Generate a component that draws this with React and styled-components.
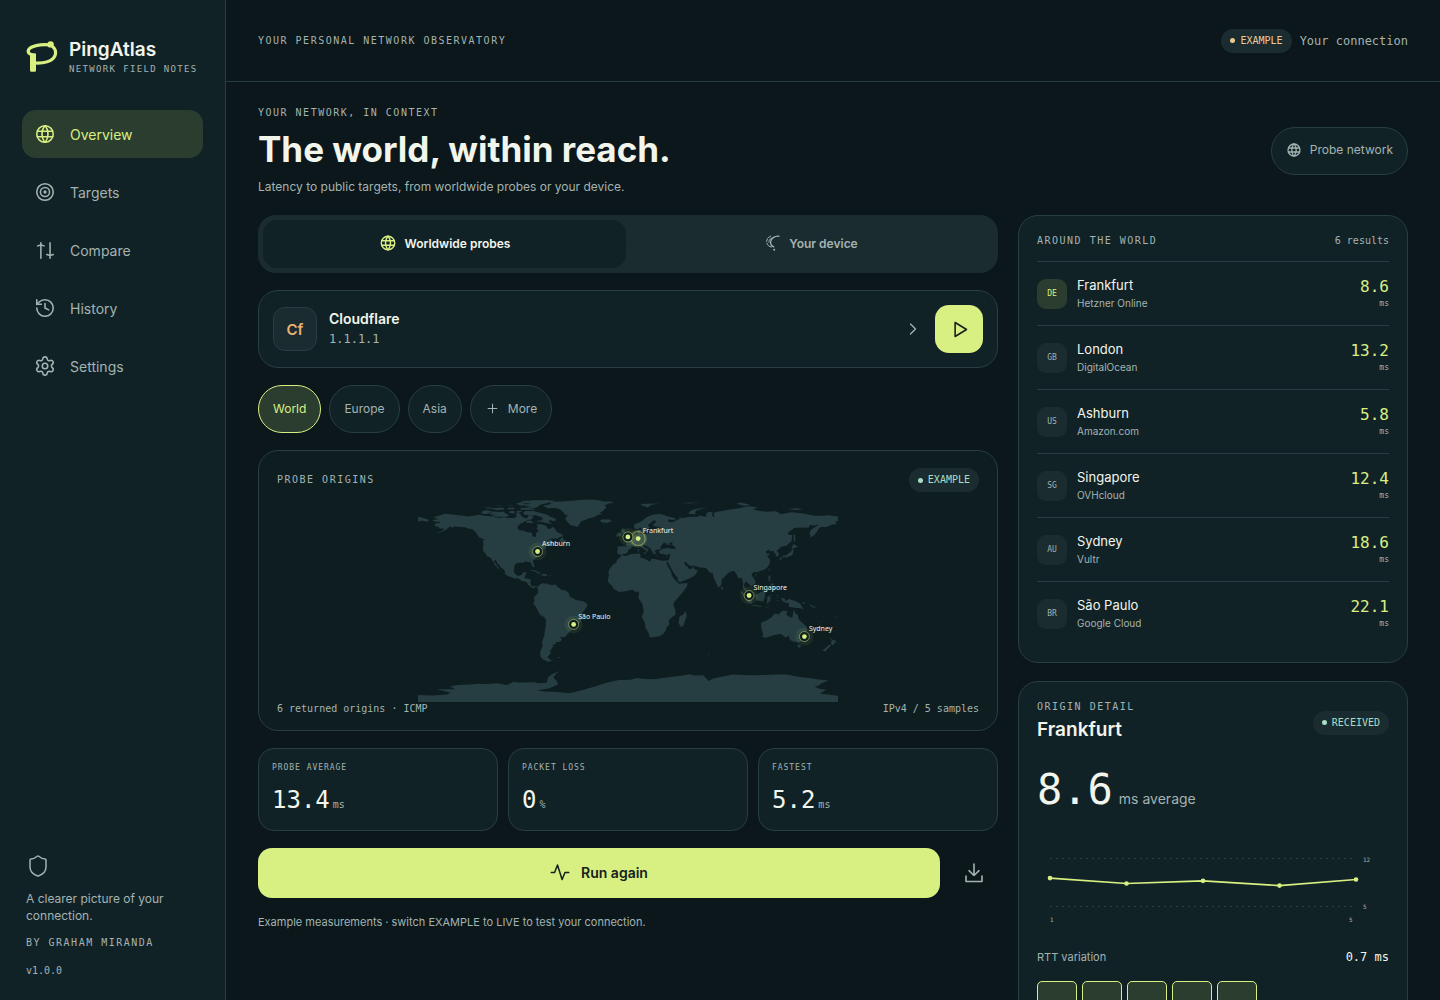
import React from 'react';
import styled, { createGlobalStyle } from 'styled-components';
import { History, Settings, Shield, ChevronRight, Plus } from 'lucide-react';
import { TbWorld, TbTarget, TbPlayerPlay } from 'react-icons/tb';

const sans = `Inter, "Liberation Sans", sans-serif`;
const mono = `"DejaVu Sans Mono", "Liberation Mono", monospace`;

const colors = {
  page: '#0b171a',
  panel: '#112226',
  raised: '#1b2c30',
  map: '#0e1d20',
  land: '#263e41',
  line: '#283e42',
  text: '#f2f5ec',
  muted: '#a4b3b1',
  lime: '#d8ef82',
  moss: '#2b3d2f',
  mint: '#a9dcc6',
  amber: '#f0c890',
};

const GlobalStyle = createGlobalStyle`
  *, *::before, *::after { box-sizing: border-box; }
  body { margin: 0; background: ${colors.page}; color: ${colors.text}; font-family: ${sans}; font-size: 13px; }
  h1, h2, p, ul, dl, dd { margin: 0; padding: 0; }
  ul { list-style: none; }
  button { font: inherit; cursor: pointer; }
  a { text-decoration: none; }
`;

const Shell = styled.div`
  display: grid;
  grid-template-columns: 226px minmax(0, 1fr);
  height: 100vh;
`;

const Sidebar = styled.aside`
  display: flex;
  flex-direction: column;
  padding: 37px 22px 21px;
  background: ${colors.panel};
  border-right: 1px solid ${colors.line};
`;

const Brand = styled.div`
  display: flex;
  gap: 9px;
  padding-left: 2px;
  white-space: nowrap;
`;

const BrandName = styled.div`
  font-size: 19px;
  font-weight: 600;
  line-height: 25px;
`;

const Eyebrow = styled.div`
  color: ${colors.muted};
  font-family: ${mono};
  font-size: ${p => p.$size || 10}px;
  letter-spacing: ${p => (p.$size === 8 ? '0.12em' : '0.15em')};
  line-height: 14px;
  text-transform: uppercase;
`;

const Nav = styled.nav`
  display: grid;
  gap: 10px;
  margin-top: 34px;
`;

const NavLink = styled.a`
  display: flex;
  align-items: center;
  gap: 14px;
  height: 48px;
  padding: 0 12px;
  border-radius: 14px;
  font-size: 14px;
  color: ${p => (p.$active ? colors.lime : colors.muted)};
  background: ${p => (p.$active ? colors.moss : 'transparent')};

  svg { width: 22px; height: 22px; stroke-width: 1.7; }
`;

const SideNote = styled.div`
  display: grid;
  gap: 12px;
  margin-top: auto;
  padding: 0 4px;
  color: ${colors.muted};
  font-size: 12px;
  line-height: 17px;
`;

const Mono = styled.span`
  font-family: ${mono};
  font-size: ${p => p.$size || 10}px;
  font-weight: 400;
  color: ${p => p.$color || colors.muted};
`;

const Main = styled.main`
  overflow-y: auto;
  scrollbar-width: none;
`;

const TopBar = styled.header`
  display: flex;
  align-items: center;
  justify-content: space-between;
  height: 82px;
  padding: 0 32px;
  border-bottom: 1px solid ${colors.line};
`;

const Inline = styled.div`
  display: flex;
  align-items: center;
  gap: 8px;
`;

const Badge = styled.span`
  display: inline-flex;
  align-items: center;
  gap: 5px;
  height: 24px;
  padding: 0 9px;
  border-radius: 12px;
  background: ${colors.raised};
  color: ${p => p.$color};
  font-family: ${mono};
  font-size: 10px;

  &::before {
    content: '';
    width: 5px;
    height: 5px;
    border-radius: 50%;
    background: currentColor;
  }
`;

const Content = styled.div`
  padding: 24px 32px 32px;
`;

const PageHead = styled.div`
  display: flex;
  align-items: center;
  justify-content: space-between;
  margin-bottom: 20px;
`;

const Title = styled.h1`
  margin: 5px 0;
  font-size: 35px;
  font-weight: 700;
  line-height: 48px;
`;

const Lead = styled.p`
  color: ${colors.muted};
  font-size: 12px;
  line-height: 17px;
`;

const Pill = styled.button`
  display: inline-flex;
  align-items: center;
  gap: 8px;
  height: 48px;
  padding: 0 14px 2px;
  border: 1px solid ${p => (p.$active ? colors.lime : colors.line)};
  border-radius: 24px;
  background: ${p => (p.$active ? colors.moss : colors.panel)};
  color: ${p => (p.$active ? colors.lime : colors.muted)};
  font-size: 12px;
`;

const Columns = styled.div`
  display: grid;
  grid-template-columns: minmax(0, 1fr) 390px;
  align-items: start;
  gap: 20px;
`;

const Stack = styled.div`
  display: grid;
  gap: ${p => p.$gap}px;
`;

const Segments = styled.div`
  display: grid;
  grid-template-columns: 1fr 1fr;
  gap: 4px;
  padding: 5px;
  border-radius: 18px;
  background: ${colors.raised};
`;

const Segment = styled.button`
  display: flex;
  align-items: center;
  justify-content: center;
  gap: 8px;
  height: 48px;
  padding: 0 0 2px;
  border: 0;
  border-radius: 14px;
  background: ${p => (p.$active ? colors.panel : 'transparent')};
  color: ${p => (p.$active ? colors.text : colors.muted)};
  font-size: 12px;
  font-weight: 600;

  svg { color: ${p => (p.$active ? colors.lime : colors.muted)}; }
`;

const Card = styled.section`
  padding: 18px 18px 17px;
  border: 1px solid ${colors.line};
  border-radius: 20px;
  background: ${p => p.$bg || colors.panel};
`;

const TargetCard = styled(Card)`
  display: flex;
  align-items: center;
  gap: 12px;
  padding: 14px;
`;

const TargetMark = styled.div`
  display: grid;
  place-items: center;
  width: 44px;
  height: 44px;
  border: 1px solid ${colors.line};
  border-radius: 12px;
  background: ${colors.raised};
  color: #edb16f;
  font-size: 15px;
  font-weight: 600;
`;

const TargetText = styled.div`
  flex: 1;
  display: grid;
  gap: 4px;
  font-size: 14px;
  font-weight: 600;
  line-height: 17px;
`;

const PlayButton = styled.button`
  display: grid;
  place-items: center;
  width: 48px;
  height: 48px;
  padding: 0;
  border: 0;
  border-radius: 14px;
  background: ${colors.lime};
  color: #14211c;
`;

const Chips = styled.div`
  display: flex;
  gap: 8px;
`;

const MapCard = styled(Card)`
  padding: 17px 18px 14px;
`;

const Spread = styled.div`
  display: flex;
  align-items: center;
  justify-content: space-between;
  line-height: 14px;
`;

const MapSvg = styled.svg`
  display: block;
  width: 100%;
  height: 210px;
`;

const Stats = styled.dl`
  display: grid;
  grid-template-columns: repeat(3, 1fr);
  gap: 10px;
`;

const Stat = styled.div`
  height: 83px;
  padding: 12px 13px;
  border: 1px solid ${colors.line};
  border-radius: 16px;
  background: ${colors.panel};

  dd {
    display: flex;
    align-items: baseline;
    gap: 3px;
    margin-top: 10px;
    font-family: ${mono};
    font-size: 24px;
    line-height: 30px;
  }
`;

const RunRow = styled.div`
  display: flex;
  align-items: center;
  gap: 10px;
`;

const RunButton = styled.button`
  display: flex;
  flex: 1;
  align-items: center;
  justify-content: center;
  gap: 11px;
  height: 50px;
  padding: 0 0 2px;
  border: 0;
  border-radius: 14px;
  background: ${colors.lime};
  color: #14211c;
  font-size: 14px;
  font-weight: 600;
`;

const IconButton = styled.button`
  display: grid;
  place-items: center;
  width: 48px;
  height: 48px;
  padding: 0;
  border: 0;
  background: none;
  color: ${colors.muted};
`;

const Footnote = styled.p`
  color: ${colors.muted};
  font-size: 11px;
  line-height: 14px;
`;

const Results = styled.ul`
  margin-top: 13px;
`;

const Result = styled.li`
  display: flex;
  align-items: center;
  gap: 10px;
  height: 64px;
  border-top: 1px solid ${colors.line};
`;

const Country = styled.div`
  display: grid;
  place-items: center;
  width: 30px;
  height: 30px;
  border-radius: 9px;
  background: ${p => (p.$active ? colors.moss : colors.raised)};
  color: ${p => (p.$active ? colors.lime : colors.muted)};
  font-family: ${mono};
  font-size: 8px;
`;

const Place = styled.div`
  flex: 1;
  font-size: 13px;
  line-height: 18px;

  small {
    display: block;
    color: ${colors.muted};
    font-size: 10px;
  }
`;

const Latency = styled.div`
  color: ${colors.lime};
  font-family: ${mono};
  font-size: 16px;
  line-height: 20px;
  text-align: right;

  small {
    display: block;
    color: ${colors.muted};
    font-size: 8px;
    line-height: 14px;
  }
`;

const City = styled.h2`
  font-size: 19px;
  font-weight: 600;
  line-height: 31px;
`;

const Average = styled.div`
  display: flex;
  align-items: baseline;
  gap: 6px;
  margin-top: 17px;
  font-family: ${mono};
  font-size: 42px;
  line-height: 56px;

  span {
    color: ${colors.muted};
    font-family: ${sans};
    font-size: 14px;
  }
`;

const ChartSvg = styled.svg`
  display: block;
  width: 100%;
  margin: 14px 0 25px;
`;

const Variation = styled.span`
  color: ${colors.muted};
  font-size: 11px;
`;

const Samples = styled.div`
  display: flex;
  gap: 5px;
  margin-top: 17px;
`;

const Sample = styled.div`
  width: 40px;
  height: 40px;
  border: 1px solid ${colors.lime};
  border-radius: 5px;
  background: ${colors.moss};
`;

// coastlines as "lon,lat" pairs
const coasts = [
  '-168,65.7 -166,66.2 -163.5,66.6 -161.8,66.2 -163.8,67.3 -166.8,68.4 -163,69.4 -160.5,70.4 -156.6,71.3 -152,70.9 -147,70.2 -141,69.7 -136.5,68.9 -133,69.6 -129.5,70 -128,70.5 -124.5,70 -124,69.4 -120,69.4 -115,68.9 -114,68.1 -109.5,68 -108,67.9 -106.5,68.6 -103,67.8 -98,67.8 -96,68.3 -95.3,69.5 -96.5,71.2 -94.5,72 -92.5,71.3 -91.5,69.6 -90.3,68.4 -88,67.8 -87.5,67.2 -86,67.9 -85.5,69.7 -82.5,69.6 -81.3,69.1 -81.5,67.5 -83.5,66.3 -86,66.1 -87,65.3 -90,63.9 -93,62.3 -94.5,60.5 -94.7,58.9 -92.8,57.1 -90.5,57.2 -87.5,56 -85,55.3 -82.3,55.1 -82.2,53 -81.3,52 -79.9,51.2 -78.8,52.2 -79,54.5 -76.6,56.5 -78.5,58.7 -77.4,60 -78,62.4 -75.5,62.3 -73.6,62.4 -71.7,61.4 -69.6,61 -69.5,59 -67.8,58.3 -66.2,58.8 -64.6,60.3 -62.5,58.2 -61.6,56.7 -60,55.2 -57.6,54.5 -55.8,53 -55.7,52.1 -58.8,51.2 -60,50.2 -65,50.2 -67,49.5 -69.5,47.7 -66.5,49.1 -64.5,48.8 -65,47.5 -64.5,46.2 -61.5,45.7 -60,46.9 -60,45.9 -63.5,44.6 -65.8,43.5 -66,44.6 -67.5,44.7 -70,43.7 -70.8,42.6 -70,41.7 -72,41.2 -74,40.6 -74.2,39.6 -75.3,38.7 -76,37 -76.5,38.8 -76.2,36.8 -75.6,35.3 -77.5,34.3 -79.2,33.2 -81.2,31.6 -81.4,30 -80.1,27 -80.5,25.2 -81.8,26.2 -82.8,28 -83.8,30 -85.4,29.7 -87,30.4 -89.5,30.3 -89.3,29.2 -91.5,29.4 -94.7,29.4 -97,27.9 -97.4,25.8 -97.9,22.5 -97.2,20.5 -96,19 -94.5,18.2 -92,18.6 -90.8,19.4 -90.4,21 -87.2,21.5 -87.5,19.6 -88.2,18 -88.9,15.9 -86,15.9 -83.2,15 -83.6,12.5 -83.7,11 -82,9 -79.6,9.6 -77.5,8.6 -77.4,7.6 -78.3,8.4 -79.8,8.9 -80.4,7.4 -82.8,8.2 -84,9.5 -85.8,10.2 -85.8,11.3 -87.6,13 -91.4,13.9 -94,16.1 -96.5,15.7 -100,16.9 -103.5,18.3 -105.5,20 -105.4,21.8 -106.5,23.5 -109.3,25.8 -110.5,27.6 -112.2,29.2 -113,31.2 -114.8,31.8 -114.5,30 -112.8,27.8 -111.3,26 -110.7,24.4 -109.5,23.2 -110.3,23.3 -112.2,25 -112.3,26.3 -114.3,27.2 -115,28 -114,28.6 -115.8,30.3 -117.2,32.8 -118.5,34 -120.6,34.6 -122,36.8 -123.8,39 -124.4,40.4 -124.1,43.5 -124,46.3 -124.7,48.4 -122.5,48.8 -124.8,50 -127.6,51.2 -129.5,54 -131,56 -133.5,58 -137,58.6 -139.8,59.7 -144,60 -148,60.4 -151.5,59.2 -151.5,61 -154,59.3 -156.3,57.4 -160,55.6 -164.8,54.6 -162,55.6 -158.5,57.3 -157.5,58.8 -162,58.6 -162,60 -165.2,60.6 -166,61.7 -164.7,63.1 -161,63.6 -161,64.5 -165,64.5',
  '-77.4,8.5 -75.5,10.7 -72,12.2 -71.5,10.9 -70,12 -68.2,10.6 -64.5,10.2 -62,10.7 -60.8,9 -58.5,7.5 -57,6 -54,5.8 -51.7,4.3 -50,1.7 -50,0 -48,-0.7 -44.5,-2.6 -41.5,-3 -38.5,-3.7 -35.4,-5.3 -34.8,-7.5 -37,-11 -39,-13.2 -39,-17.5 -40.8,-21.5 -42,-23 -44.8,-23.3 -48,-25.5 -48.7,-28.2 -50.5,-30.5 -52.3,-32.4 -53.8,-34.4 -57,-34.5 -58.4,-34 -57.3,-35.5 -56.8,-36.9 -57.8,-38.2 -62,-39 -62.2,-40.8 -65,-41 -63.7,-42.5 -65.4,-43.5 -65.5,-45 -67.5,-46 -65.8,-47.7 -67.7,-49.9 -69,-51.5 -68.4,-52.4 -65.2,-54.7 -68.5,-55.5 -72,-54 -74.5,-52 -75.5,-48 -74.5,-45 -73,-42 -73.8,-38.5 -73.2,-37 -71.6,-33 -71.5,-30 -70.5,-25 -70.2,-20 -71.5,-17.5 -75.5,-15 -77,-12.2 -79,-8.2 -81.2,-6 -80.4,-3.5 -79.9,-2.5 -80.8,-1 -80,0.8 -78.8,1.5 -77,3.8 -77.4,6.5',
  '-73,78.2 -68.5,79.1 -65.5,80 -67,80.7 -62,81.7 -54,82 -46,82.7 -38,83.4 -30,83.5 -22,82.5 -24,82 -15,81.8 -12,81.3 -17,80 -20,78.7 -18.5,77 -20,75.2 -22,73.4 -24.5,72.4 -22,71.2 -26,70.2 -29,68.3 -33,67.6 -37,65.8 -40,65 -42,62 -43.5,60 -46,60.8 -49,61.5 -51.5,63.7 -53.5,66.5 -53.5,68.5 -51,69.6 -54.5,70.6 -55,72.5 -58,75 -62,76.2 -68.5,76.1 -71,77.2',
  '-61.5,82.4 -70,83.1 -80,83 -90,82.2 -92,81.3 -87,80.3 -83,79.9 -87.5,79 -88,78 -83,77.5 -89.5,76.5 -80,76.3 -78,77 -76,78.5 -74.5,79.4 -68,80.7 -64.5,81.5',
  '-80,75.6 -79.8,74.8 -86,74.5 -92,74.8 -92,76.6 -96.5,76.9 -94,77 -88.5,76.4 -84,75.8',
  '-85,73.8 -81,73.7 -78,72.8 -73,71.5 -68.5,70.3 -67,69 -62,67 -62,65.5 -64,65 -67,66 -68,64.8 -65,62.5 -67,62.7 -71,63.7 -74,64.5 -78,64.5 -77.7,65.3 -73.7,65.8 -73,68 -76,69 -79,70 -83,69.9 -88.7,70.5 -89.5,71.2 -89.8,72.5 -88,73.6',
  '-101.5,69.7 -105,68.8 -113.5,68.8 -117,69.8 -112,70.4 -117.5,70.6 -119,71.6 -115,73.2 -109,72.9 -107,73.3 -105,71.8',
  '-123,71 -126,72 -124.5,74 -121,74.3 -116,73.4 -120,71.6',
  '-102.5,72.8 -100.5,73.8 -97.5,73.7 -97,72.3 -98.5,71.3 -101,72',
  '-95.5,72.2 -95.5,73.9 -90.5,73.8 -92.5,72.5',
  '-117,75.2 -111,74.5 -106,75 -106,76 -109,76.7 -113,76.2 -117,76',
  '-123,76.2 -118,75.7 -116,76.5 -121,77',
  '-104,75.2 -98,75 -97,76.5 -102,76.6',
  '-96,80.2 -92,81.2 -88,80 -86,79 -92,78.3',
  '-104.5,79 -100,78.5 -96,78 -100,77.9',
  '-113,78.3 -110,78.6 -110,78',
  '-87,65.2 -84,65.8 -80.5,63.8 -83,63.3 -87,63.6',
  '-59.3,47.7 -57,50.8 -55.5,51.5 -56,50 -53,48 -53.5,46.7 -56,47',
  '-84.8,22 -82.5,23.1 -79.5,22.8 -74.3,20.2 -77.5,19.9 -78,21 -82,22.5',
  '-74.4,18.4 -73,19.9 -70,19.8 -68.5,18.6 -71,18',
  '-67,18.4 -65.7,18.4 -65.7,18 -67,18',
  '-78.3,18.4 -76.3,18.1 -77.5,17.8',
  '-61,-51.5 -58,-51.4 -59,-52.2',
  '-156,20.2 -155,19.5 -155.8,19',
  '-158.2,21.6 -157.6,21.3 -156.5,20.8',
  '-24,65.5 -22.5,66.4 -16,66.5 -13.7,65 -18.5,63.4 -22.6,64',
  '-5.6,50.1 -3,51.3 -5.2,51.8 -4.2,53 -3,53.8 -3.5,54.8 -5.1,54.9 -5.7,56.5 -6,57.8 -5,58.6 -3,58.6 -4,57.6 -2,57.6 -3,56 -1.5,54.9 0,53.6 0.4,53 1.7,52.7 1,51.4 -1,50.7',
  '-10,51.7 -9.8,54.2 -7.3,55.3 -5.6,54.5 -6.2,52.2',
  '-9,37 -9.4,38.8 -8.7,41 -9.2,43.2 -4,43.5 -1.6,43.4 -1.2,46 -4.6,48.3 -1.6,48.7 -1.6,49.7 0.2,49.6 1.7,50.8 4,51.8 4.8,53 8.2,53.7 8.2,55.5 8.2,57 10.5,57.7 10.8,56.3 9.9,55 11,54 14,54.1 18.5,54.7 21,55.3 21.2,57 24.3,57.2 23.6,59.2 28,59.6 30,60 25,60.2 22,60.6 21.4,62 24.5,64.9 22.2,65.8 19,63.3 17.2,61.6 17.5,60.5 18.8,59.8 16.5,57.5 15.8,56.2 14.3,55.5 12.8,55.5 11.2,58.9 10.5,59.3 8,58 5.6,58.8 5,61.2 6,62.6 10,64 13,66 15.5,68.2 19,69.9 23.5,70.9 28,71.1 31,70.3 33,69.4 40.5,67.5 41,66.5 38,66 34,66.7 35,64.4 38,64 40,64.7 42,66.4 44,66.2 44,68.4 46.5,67.8 53,68.7 59,68.6 61,69.8 67,68.7 67,71.5 69.5,73 72.5,72.7 72,70 74,68 73.5,71.5 75,72.8 80.5,73.6 87,75 95,76 104,77.7 111,76.6 107,75 113,73.8 119,73 127,73.5 131,71 140,72.6 150,71.6 160,69.7 168,69.7 171,70 180,69 180,65 177.5,64.6 179,62.5 174,61.8 170,60 165,60 163,58 162,56 159.8,53.2 156.7,51 155.6,55 157,57.8 162,60.8 163.5,62.4 160,61.2 156,61.6 154.5,59.4 149,59.5 142.5,59.2 137,55 137.5,53.6 141,52.9 140.5,50 140,47.5 135.5,44 131.8,43.2 129.7,41.5 127.5,39.6 129.4,37 129,35.2 126.4,34.5 126.7,37 125,38 125,39.6 121.5,38.9 121.5,40.8 118,39 119,37.3 122.4,37 119.2,35 121.8,32 121.6,29 119.5,25.5 117,23.5 113.5,22.2 110.4,21 108,21.6 105.8,19 107.5,16.5 109.2,13.5 109,11.5 105,8.7 104.8,10.4 102.5,12 100.9,13.4 99.9,11.5 99.5,9.3 100.5,7.2 103.4,4.5 104,1.4 101.3,2.8 100.3,5.8 98.3,8 98.7,11.5 97.6,16.3 95.3,15.8 94.3,17 92,21.3 90.5,22.5 87,21.3 85,19.7 82,16.5 80.2,15 80.2,13 79.8,10.4 77.6,8.1 76.3,10 74.8,13.5 73,17.5 72.8,20.5 70.5,20.8 69,22.3 67,24.8 61.5,25.2 57,26.8 54,26.6 51,28 50,30.1 48,29.9 48.8,28 50.2,26.2 51.3,25.9 51.6,24.4 54,24.1 56.3,26 57,24 59.8,22.5 57.8,19 55,17.2 52,15.6 45,12.8 43.3,13 42.5,16.5 39.2,20.5 37.2,24.5 34.9,28.5 34.2,31.3 35,32 36,35.5 36,36.8 32.5,36.1 30.5,36.8 27.5,36.8 26.3,39.3 29,41 32,41.8 35,42 38,41 41.5,41.5 38.5,44.3 37,45.3 39,47.2 35,46.3 36.5,45.3 33.5,44.5 32.5,46 30.7,46.5 28.6,44 27.7,42.5 28.7,41.2 26,40.7 23.8,40.2 22.8,39.2 24,38 23,36.5 21.3,37.6 19.4,41.5 16,43.5 13.7,45.1 12.4,44.8 13.8,42.8 16,41.8 18.4,40 17,40.4 16.6,38.8 15.7,38 15.5,40 12,42 10.3,43.8 8.5,44.3 5,43.4 3.1,43 3,41.8 0.5,40.5 0,38.8 -1.8,37 -4.5,36.7 -5.6,36',
  '-180,69 -175,67.5 -170,66 -173,64.5 -176,65.3 -180,65',
  '-6,35.8 -2,35.1 3,36.9 10,37.3 11,35 10.3,34 15,32.4 19,30.3 20,32.5 23,32.6 29,31 34,31.3 34.9,29.5 32.6,29.9 34,26.5 37.2,21 37.5,18.5 39.5,15.5 43.2,12 43.4,11.4 51.2,11.9 50.5,9 47,4 43,-0.5 39.5,-4.5 39,-7 40.5,-11 40.7,-15 35,-19.8 35.5,-23.5 33,-26 32.6,-28 30.5,-31.5 27,-33.7 20,-34.8 18.3,-34 18.2,-31.8 15,-26.5 14.4,-22 11.8,-17 13.5,-12.5 12.3,-6 9,-1 9.5,3.8 8.5,4.6 6,4.3 4.3,6.3 -2,4.9 -7.7,4.4 -12.5,7.4 -13.5,9.5 -16.7,12.3 -17.4,14.7 -16.2,19 -17,21.3 -15.8,24 -13,27.7 -9.8,29.7 -9.8,31.5 -6.8,34',
  '49.3,-12 50.4,-15.8 47.2,-25 45,-25.5 43.3,-22 44.3,-16.3 47,-15.5',
  '10.5,79.6 16,80 27,80.2 20,79 17,76.7 13,78',
  '45,80.6 55,81 62,80.7 52,80.1',
  '51.5,71.5 53,73.2 56,75 68,77 66,76.3 58,74 57.5,70.7',
  '93,80 97,81 105,78.8 100,78',
  '137,75.5 145,76 150,75.2 143,74.6',
  '8.3,38.9 8.3,41 9.5,41 9.6,39.2',
  '12.5,38 15.5,38.2 15,36.7',
  '23.6,35.5 26.2,35.3 24,35',
  '32.4,35 34.4,35.6 33.5,34.7',
  '142,46 143.5,49.5 143,54.2 142,53 142,49',
  '140,41.6 141.8,45.4 145.5,43.3 143,42',
  '141,41.4 142,39.5 140.8,35.7 137,34.5 135.5,33.6 134,34.5 131,34 133,35.5 136,35.7 137,37 139.5,38.5',
  '130,33.8 131.8,33.5 131,31.3 130,32',
  '132.5,33.6 134.5,34.2 133.2,32.9',
  '120.2,23 121.6,25.2 121,22.2',
  '108.8,19.2 111,19.9 109.5,18.3',
  '120.5,18.5 122.2,18.4 121.7,14 124,12.7 120.5,14',
  '122,7 125.5,9.7 126.5,7 125.5,5.7 124,7',
  '122,11.6 124.5,11.4 125,12.4 125.4,11 123,9.2',
  '117.3,8.4 119.5,11.2 119,10',
  '80,9.6 81.8,7.5 80.5,6 79.8,7.5',
  '95.3,5.6 98,4 104,-1.5 106,-3 105.8,-5.8 102,-4 98.7,1.7',
  '105.2,-6.8 108.5,-6.7 114.5,-7.8 114.4,-8.7 106.5,-7.4',
  '109,1.5 111.5,2.8 115,5 117,7 119,5 117.5,3 117.5,0.8 116,-4 110.2,-3',
  '119,-5.5 119.5,0 121,1.2 125,1.5 120.5,0.3 123,-1 121.5,-2 123,-4.5 121,-3 120.3,-5.5',
  '127.5,2 128.5,1 128,-0.8',
  '126,-3.2 130.5,-3 128,-3.6',
  '116.5,-8.4 122.8,-8.3 119,-9',
  '123.6,-10.3 127,-8.4 125,-9.4',
  '131,-1 134,-0.8 135,-3.3 138,-1.7 144.5,-3.9 147.8,-6 150.5,-10.5 147,-9.5 143,-9.2 138,-8.4 138,-5.5 133,-4',
  '148.5,-5.7 152,-4.3 151,-6',
  '155,-5.5 160,-8.5 161.8,-10.2 157,-8',
  '164,-20.2 167,-22.3 165,-21.5',
  '166.8,-15 168,-17.5 167,-16',
  '177.5,-17.6 179.8,-16.5 178.3,-18.2',
  '114,-22 114.2,-26 115.8,-32 115,-34.2 118,-35 124,-33 131,-31.5 135,-34.8 138,-33 138.2,-35.5 140.5,-38 144,-38.5 146.3,-39 150,-37.4 151.2,-33.5 153,-31 153.5,-28 153,-25.2 150.8,-23.3 146.3,-19 145.4,-15 143.5,-14.3 142.5,-10.8 141.6,-13 140.8,-17.5 139.2,-17.5 135.5,-15 136.9,-12.2 132.6,-11.5 130,-14 129,-15 126,-14 122.3,-18 119,-20',
  '144.8,-41 148.3,-41 147.5,-43.5 146,-43.4',
  '172.7,-34.5 175.5,-36.7 178.5,-37.7 176.8,-40 175.2,-41.6 173.8,-39.3 174.7,-37',
  '172.7,-40.6 174.2,-41.5 171,-44.5 169,-46.6 166.5,-46',
  '68.5,-48.8 70.5,-49 69.5,-49.8',
  '-180,-84 -167,-84.5 -155,-83.5 -152,-82 -164,-79 -148,-79 -152.6,-76.5 -146,-75.5 -135,-75 -128,-74.4 -120,-74.5 -112,-74 -104,-75.4 -98,-72.6 -94,-73.4 -88,-73.2 -80,-73 -77,-74 -69.7,-73.5 -68.3,-68.3 -64,-65.5 -58,-63.4 -62,-66 -64,-69 -61,-72 -60,-75 -68,-78.3 -78,-80 -72,-81 -60,-81.5 -50,-82.5 -38,-79.5 -27,-76.2 -20,-74 -15,-72.6 -8,-71.2 2,-71 7.4,-69.5 14,-70.3 22,-70.5 30,-69.5 36,-68.5 45,-67.5 53,-66.2 57,-67.2 64.6,-67 69,-72 73,-69.8 79,-68.5 90,-66.3 98,-66.8 107,-67 118,-66.8 127,-66.3 136,-66.4 147,-68.5 155,-69.3 162,-70.5 172,-71.5 166,-74 163,-76 160,-76.9 164,-78.6 170,-79.5 164.5,-82.6 180,-84.6 180,-90 -180,-90',
];

const project = (lon, lat) => [(lon + 180) * 7 / 6, (90 - lat) * 7 / 6];

const landPath = coasts
  .map(c => 'M' + c.split(' ').map(p => {
    const [lon, lat] = p.split(',').map(Number);
    return project(lon, lat).map(n => n.toFixed(1)).join(' ');
  }).join('L') + 'Z')
  .join('');

const origins = [
  { code: 'DE', city: 'Frankfurt', host: 'Hetzner Online', ms: '8.6', lon: 8.7, lat: 50.1, active: true },
  { code: 'GB', city: 'London', host: 'DigitalOcean', ms: '13.2', lon: -0.1, lat: 51.5, hideLabel: true },
  { code: 'US', city: 'Ashburn', host: 'Amazon.com', ms: '5.8', lon: -77.5, lat: 39 },
  { code: 'SG', city: 'Singapore', host: 'OVHcloud', ms: '12.4', lon: 103.8, lat: 1.3 },
  { code: 'AU', city: 'Sydney', host: 'Vultr', ms: '18.6', lon: 151.2, lat: -33.9 },
  { code: 'BR', city: 'São Paulo', host: 'Google Cloud', ms: '22.1', lon: -46.6, lat: -23.5 },
];

const stats = [
  { label: 'Probe average', value: '13.4', unit: 'ms' },
  { label: 'Packet loss', value: '0', unit: '%' },
  { label: 'Fastest', value: '5.2', unit: 'ms' },
];

const samples = [9.1, 8.3, 8.7, 8, 8.9];

const Logo = () => (
  <svg width="36" height="38" viewBox="24 37 36 38" fill="none" stroke={colors.lime} strokeWidth="3.2" strokeLinecap="round">
    <path d="M30 53.500H36V70.500a1.300 1.300 0 0 1-1.300 1.300H31.300a1.300 1.300 0 0 1-1.300-1.300Z" fill={colors.lime} stroke="none" />
    <path d="M34 55C29.500 54.800 27.300 52.500 28.600 49.800C30.500 46 40 44 49 44.800" />
    <path d="M52.500 46.500C56.500 49.500 56.600 55.200 53 58.700C49.500 62 43 63.300 35.500 63" />
    <circle cx="50.600" cy="44.400" r="3.200" fill={colors.lime} stroke="none" />
  </svg>
);

const CompareIcon = () => (
  <svg viewBox="0 0 24 24" fill="none" stroke="currentColor" strokeLinecap="round" strokeLinejoin="round">
    <path d="M7.500 21V4M4 7.500L7.500 6.500L11 7.500M17.500 4V21M14 17L17.500 18L21 17" />
  </svg>
);

const DeviceIcon = () => (
  <svg width="16" height="16" viewBox="0 0 16 16" fill="none" stroke="currentColor" strokeLinecap="round">
    <path d="M14 1.200C9.500 0.800 5.800 3.500 5.600 7C5.500 9.500 6.800 11.200 8.800 11.800" strokeWidth="1.300" />
    <path d="M5.500 1.200C3 2.200 1.500 4.300 1.700 6.500M1.900 8.200C2.500 10.500 4.300 11.800 6.500 12M6.300 3.200C4.500 4.200 3.800 5.800 3.900 7.300" />
    <circle cx="9.200" cy="14.700" r="1" fill="currentColor" stroke="none" />
  </svg>
);

const PulseIcon = () => (
  <svg width="20" height="20" viewBox="0 0 24 24" fill="none" stroke="currentColor" strokeWidth="1.800" strokeLinecap="round" strokeLinejoin="round">
    <path d="M1.500 12.500H5.500L9 3.500L14.500 21L18 12.500H22.500" />
  </svg>
);

const DownloadIcon = () => (
  <svg width="24" height="24" viewBox="0 0 24 24" fill="none" stroke="currentColor" strokeWidth="1.600" strokeLinecap="round" strokeLinejoin="round">
    <path d="M12 3V14.500M7 9.700L12 14.500L17 9.700M4 15V20.500H20V15" />
  </svg>
);

const navItems = [
  { label: 'Overview', icon: TbWorld, active: true },
  { label: 'Targets', icon: TbTarget },
  { label: 'Compare', icon: CompareIcon },
  { label: 'History', icon: History },
  { label: 'Settings', icon: Settings },
];

const WorldMap = () => (
  <MapSvg viewBox="0 0 420 210" role="img" aria-label="Probe origins">
    <path d={landPath} fill={colors.land} />
    {origins.map(o => {
      const [x, y] = project(o.lon, o.lat);
      return (
        <g key={o.code}>
          <circle cx={x} cy={y} r="9" fill={colors.lime} opacity={o.active ? 0.16 : 0.07} />
          <circle cx={x} cy={y} r={o.active ? 7 : 5} fill={o.active ? 'none' : colors.map} stroke={colors.lime} strokeOpacity="0.6" strokeWidth="0.8" />
          <circle cx={x} cy={y} r="2.4" fill={colors.lime} />
          {!o.hideLabel && (
            <text x={x + 4.5} y={y - 5.5} fill={colors.text} fontFamily="Noto Sans, sans-serif" fontSize="7">{o.city}</text>
          )}
        </g>
      );
    })}
  </MapSvg>
);

const LatencyChart = () => {
  const points = samples.map((v, i) => [13 + i * 76.5, 65 - (v - 5) * 6.8]);
  return (
    <ChartSvg viewBox="0 0 352 84" role="img" aria-label="Round trip times">
      <path d="M13 17.500H319M13 65.500H319" stroke={colors.line} strokeDasharray="2 4" />
      <polyline points={points.map(p => p.join(',')).join(' ')} fill="none" stroke={colors.lime} strokeWidth="1.600" />
      {points.map(([x, y]) => <circle key={x} cx={x} cy={y} r="2.300" fill={colors.lime} />)}
      <g fill={colors.muted} fontFamily="DejaVu Sans Mono, monospace" fontSize="6">
        <text x="326" y="21">12</text>
        <text x="326" y="68">5</text>
        <text x="13" y="81">1</text>
        <text x="312" y="81">5</text>
      </g>
    </ChartSvg>
  );
};

const App = () => (
  <>
    <GlobalStyle />
    <Shell>
      <Sidebar>
        <Brand>
          <Logo />
          <div>
            <BrandName>PingAtlas</BrandName>
            <Eyebrow $size={9}>Network field notes</Eyebrow>
          </div>
        </Brand>
        <Nav>
          {navItems.map(({ label, icon: Icon, active }) => (
            <NavLink key={label} href="#" $active={active}>
              <Icon />
              {label}
            </NavLink>
          ))}
        </Nav>
        <SideNote>
          <Shield size={24} strokeWidth={1.5} />
          <p>A clearer picture of your connection.</p>
          <Eyebrow>By Graham Miranda</Eyebrow>
          <Mono>v1.0.0</Mono>
        </SideNote>
      </Sidebar>

      <Main>
        <TopBar>
          <Eyebrow>Your personal network observatory</Eyebrow>
          <Inline>
            <Badge $color={colors.amber}>EXAMPLE</Badge>
            <Mono $size={12}>Your connection</Mono>
          </Inline>
        </TopBar>

        <Content>
          <PageHead>
            <div>
              <Eyebrow>Your network, in context</Eyebrow>
              <Title>The world, within reach.</Title>
              <Lead>Latency to public targets, from worldwide probes or your device.</Lead>
            </div>
            <Pill type="button"><TbWorld size={16} strokeWidth={1.9} />Probe network</Pill>
          </PageHead>

          <Columns>
            <Stack $gap={17}>
              <Segments>
                <Segment type="button" $active><TbWorld size={18} strokeWidth={1.9} />Worldwide probes</Segment>
                <Segment type="button"><DeviceIcon />Your device</Segment>
              </Segments>

              <TargetCard>
                <TargetMark>Cf</TargetMark>
                <TargetText>
                  Cloudflare
                  <Mono $size={12}>1.1.1.1</Mono>
                </TargetText>
                <ChevronRight size={20} strokeWidth={1.5} color={colors.muted} />
                <PlayButton type="button" aria-label="Run probe"><TbPlayerPlay size={21} strokeWidth={1.8} /></PlayButton>
              </TargetCard>

              <Chips>
                <Pill type="button" $active>World</Pill>
                <Pill type="button">Europe</Pill>
                <Pill type="button">Asia</Pill>
                <Pill type="button"><Plus size={15} strokeWidth={1.6} />More</Pill>
              </Chips>

              <MapCard $bg={colors.map}>
                <Spread>
                  <Eyebrow>Probe origins</Eyebrow>
                  <Badge $color={colors.mint}>EXAMPLE</Badge>
                </Spread>
                <WorldMap />
                <Spread>
                  <Mono>6 returned origins · ICMP</Mono>
                  <Mono>IPv4 / 5 samples</Mono>
                </Spread>
              </MapCard>

              <Stats>
                {stats.map(s => (
                  <Stat key={s.label}>
                    <Eyebrow as="dt" $size={8}>{s.label}</Eyebrow>
                    <dd>{s.value}<Mono>{s.unit}</Mono></dd>
                  </Stat>
                ))}
              </Stats>

              <RunRow>
                <RunButton type="button"><PulseIcon />Run again</RunButton>
                <IconButton type="button" aria-label="Download results"><DownloadIcon /></IconButton>
              </RunRow>

              <Footnote>Example measurements · switch EXAMPLE to LIVE to test your connection.</Footnote>
            </Stack>

            <Stack $gap={18}>
              <Card>
                <Spread>
                  <Eyebrow>Around the world</Eyebrow>
                  <Mono>6 results</Mono>
                </Spread>
                <Results>
                  {origins.map(o => (
                    <Result key={o.code}>
                      <Country $active={o.active}>{o.code}</Country>
                      <Place>{o.city}<small>{o.host}</small></Place>
                      <Latency>{o.ms}<small>ms</small></Latency>
                    </Result>
                  ))}
                </Results>
              </Card>

              <Card>
                <Spread>
                  <div>
                    <Eyebrow>Origin detail</Eyebrow>
                    <City>Frankfurt</City>
                  </div>
                  <Badge $color={colors.mint}>RECEIVED</Badge>
                </Spread>
                <Average>8.6<span>ms average</span></Average>
                <LatencyChart />
                <Spread>
                  <Variation>RTT variation</Variation>
                  <Mono $size={12} $color={colors.text}>0.7 ms</Mono>
                </Spread>
                <Samples>
                  {samples.map(v => <Sample key={v} />)}
                </Samples>
              </Card>
            </Stack>
          </Columns>
        </Content>
      </Main>
    </Shell>
  </>
);

export default App;
